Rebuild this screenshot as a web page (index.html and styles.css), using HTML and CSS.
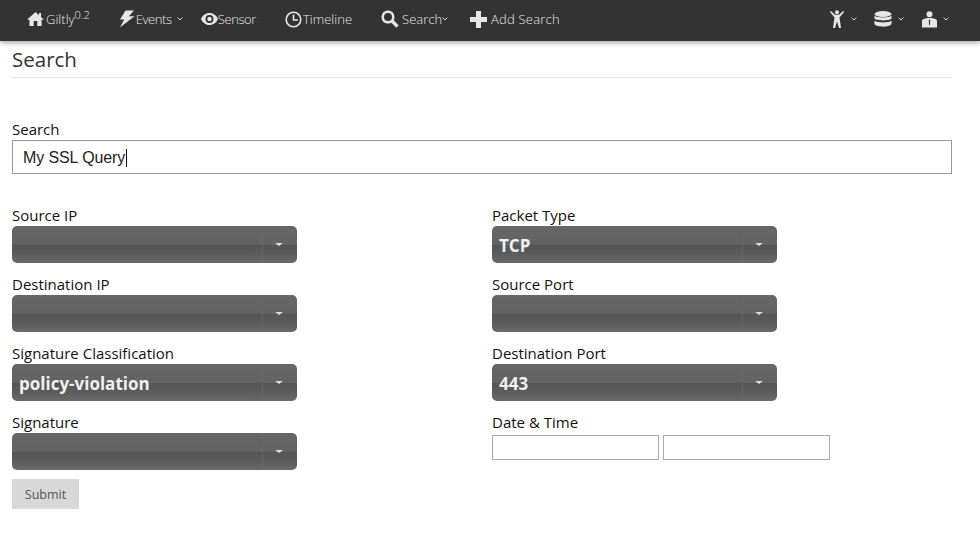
FILE: index.html

```html
<!doctype html>
<html lang="en">
	<head>
		<meta charset="UTF-8">
		<title>Search</title>
		<link rel="stylesheet" href="styles.css">
	</head>
	<body>
		<nav class="navbar">
			<div class="nav-left">
				<a class="nav-item brand">
					<svg class="icon" width="17" height="16" viewBox="0 0 17 16"><path d="M8.500 1 L12 4.200 V2 H14 V6 L17 8.700 H14.600 V15 H10.300 V10 H6.700 V15 H2.400 V8.700 H0 Z"/></svg>
					<span class="nav-text giltly">Giltly<sup>0.2</sup></span>
				</a>
				<a class="nav-item events">
					<svg class="icon" width="16" height="18" viewBox="0 0 17 18"><path d="M7 0 H16 L10.500 6 H16.500 L1 18 L5.500 9.500 H1 Z"/></svg>
					<span class="nav-text tight narrow">Events</span>
					<svg class="chev chev-gap" width="6" height="4" viewBox="0 0 6 4"><path d="M.5.5 3 3 5.500.5"/></svg>
				</a>
				<a class="nav-item sensor">
					<svg class="icon" width="17" height="12" viewBox="0 0 17 12"><path fill-rule="evenodd" d="M8.500 0 C12.500 0 15.500 2.500 17 6 C15.500 9.500 12.500 12 8.500 12 C4.500 12 1.500 9.500 0 6 C1.500 2.500 4.500 0 8.500 0 Z M8.500 2 A4 4 0 1 0 8.500 10 A4 4 0 1 0 8.500 2 Z"/><circle cx="8.500" cy="6" r="2.200"/></svg>
					<span class="nav-text flush narrow">Sensor</span>
				</a>
				<a class="nav-item timeline">
					<svg class="icon clock" width="17" height="17" viewBox="0 0 17 17"><circle cx="8.500" cy="8.500" r="7.300"/><path d="M8.500 3.500 V9 H13"/></svg>
					<span class="nav-text tight">Timeline</span>
				</a>
				<a class="nav-item search">
					<svg class="icon magnifier" width="18" height="18" viewBox="0 0 18 18"><circle cx="7" cy="7" r="5.300"/><path class="handle" d="M11 11 L16.500 16.500"/></svg>
					<span class="nav-text">Search</span>
					<svg class="chev" width="6" height="4" viewBox="0 0 6 4"><path d="M.5.5 3 3 5.500.5"/></svg>
				</a>
				<a class="nav-item">
					<svg class="icon" width="17" height="17" viewBox="0 0 17 17"><path d="M6 0 H11 V6 H17 V11 H11 V17 H6 V11 H0 V6 H6 Z"/></svg>
					<span class="nav-text wide">Add Search</span>
				</a>
			</div>
			<div class="nav-right">
				<a class="nav-item">
					<svg class="icon" width="16" height="18" viewBox="0 0 16 18"><circle cx="8" cy="2.200" r="2"/><path d="M.8 1.800 L1.800 1 L6 4.800 H10 L14.200 1 L15.200 1.800 L10.500 7.500 L12 18 H10 L8 11.500 L6 18 H4 L5.500 7.500 Z"/></svg>
					<svg class="chev chev-wide" width="6" height="4" viewBox="0 0 6 4"><path d="M.5.5 3 3 5.500.5"/></svg>
				</a>
				<a class="nav-item db">
					<svg class="icon" width="18" height="16" viewBox="0 0 18 16"><ellipse cx="9" cy="3" rx="8.500" ry="3"/><path d="M.5 4.500 C2 7 16 7 17.500 4.500 V7.500 C16 10 2 10 .5 7.500 Z"/><path d="M.5 9.500 C2 12 16 12 17.500 9.500 V13 C16 16.500 2 16.500 .5 13 Z"/></svg>
					<svg class="chev chev-wide" width="6" height="4" viewBox="0 0 6 4"><path d="M.5.5 3 3 5.500.5"/></svg>
				</a>
				<a class="nav-item">
					<svg class="icon" width="15" height="17" viewBox="0 0 15 17"><circle cx="7.500" cy="3.300" r="3"/><path fill-rule="evenodd" d="M0 16.500 V9.500 C0 8.500 2.500 7.500 5.500 7 H9.500 C12.500 7.500 15 8.500 15 9.500 V16.500 Z M7.500 8 L6.800 9.500 L7 13.500 L7.500 14.500 L8 13.500 L8.200 9.500 Z"/></svg>
					<svg class="chev chev-wide" width="6" height="4" viewBox="0 0 6 4"><path d="M.5.5 3 3 5.500.5"/></svg>
				</a>
			</div>
		</nav>

		<main class="content">
			<h1 class="page-title">Search</h1>

			<form class="search-form">
				<label class="field-label">Search</label>
				<div class="name-input"><span class="caret-text">My SSL Query</span></div>

				<div class="columns">
					<div class="column">
						<label class="field-label">Source IP</label>
						<div class="dropdown"><span class="dropdown-value"></span><span class="dropdown-arrow"></span></div>
						<label class="field-label">Destination IP</label>
						<div class="dropdown"><span class="dropdown-value"></span><span class="dropdown-arrow"></span></div>
						<label class="field-label">Signature Classification</label>
						<div class="dropdown"><span class="dropdown-value">policy-violation</span><span class="dropdown-arrow"></span></div>
						<label class="field-label">Signature</label>
						<div class="dropdown"><span class="dropdown-value"></span><span class="dropdown-arrow"></span></div>
					</div>
					<div class="column">
						<label class="field-label">Packet Type</label>
						<div class="dropdown"><span class="dropdown-value">TCP</span><span class="dropdown-arrow"></span></div>
						<label class="field-label">Source Port</label>
						<div class="dropdown"><span class="dropdown-value"></span><span class="dropdown-arrow"></span></div>
						<label class="field-label">Destination Port</label>
						<div class="dropdown"><span class="dropdown-value">443</span><span class="dropdown-arrow"></span></div>
						<label class="field-label">Date &amp; Time</label>
						<div class="date-row">
							<input class="date-input" type="text">
							<input class="date-input" type="text">
						</div>
					</div>
				</div>

				<button class="submit-btn" type="button">Submit</button>
			</form>
		</main>
	</body>
</html>
```

FILE: styles.css

```css
* {
	box-sizing: border-box;
}
body {
	margin: 0;
	background-color: white;
	color: #111;
	font-family: "Open Sans", "Noto Sans", sans-serif;
}

/* top bar */
.navbar {
	display: flex;
	justify-content: space-between;
	height: 41px;
	background-color: #333;
	box-shadow: 0 2px 5px rgba(0, 0, 0, 0.35);
	color: #e8e8e8;
}
.nav-left {
	display: flex;
	align-items: center;
	padding-left: 27px;
	padding-bottom: 3px;
}
.nav-right {
	display: flex;
	align-items: center;
	padding-right: 31px;
	padding-bottom: 3px;
}
.nav-item {
	display: flex;
	align-items: center;
	margin-right: 29px;
}
.nav-right .nav-item {
	margin-right: 17px;
}
.nav-right .nav-item.db {
	margin-right: 18px;
}
.nav-right .nav-item:last-child {
	margin-right: 0;
}
.nav-item.events {
	margin-right: 18px;
}
.nav-item.search {
	margin-right: 22px;
}
.nav-text {
	margin-left: 3px;
	font-size: 13px;
	font-weight: 300;
	white-space: nowrap;
}
.nav-text.tight {
	margin-left: 1px;
}
.nav-text.flush {
	margin-left: 0;
}
.nav-text.narrow {
	letter-spacing: -0.4px;
}
.nav-text.wide {
	margin-left: 4px;
	letter-spacing: 0.2px;
}
.nav-text.giltly {
	margin-left: 2px;
}
.giltly sup {
	font-size: 11px;
	line-height: 0;
	vertical-align: 5px;
}
.icon {
	display: block;
	flex: none;
	fill: #e6e6e6;
}
.icon.clock,
.icon.magnifier {
	fill: none;
	stroke: #e6e6e6;
}
.clock {
	stroke-width: 1.6;
}
.magnifier {
	stroke-width: 2.6;
}
.magnifier .handle {
	stroke-width: 3.4;
}
.chev {
	display: block;
	flex: none;
	fill: none;
	stroke: #d8d8d8;
	stroke-width: 1;
}
.chev-gap {
	margin-left: 5px;
}
.chev-wide {
	margin-left: 6px;
}

/* page */
.content {
	width: 952px;
	padding-left: 12px;
}
.page-title {
	margin: 0;
	padding: 4px 0 3px;
	height: 37px;
	border-bottom: 1px solid #e5e5e5;
	color: #333;
	font-size: 20.5px;
	font-weight: 400;
	line-height: 28px;
}
.search-form {
	padding-top: 41px;
}
.field-label {
	display: block;
	height: 20px;
	font-size: 15px;
	line-height: 20px;
	white-space: nowrap;
}
.name-input {
	display: flex;
	align-items: center;
	height: 34px;
	margin-top: 1px;
	padding-top: 1px;
	padding-left: 10px;
	border: 1px solid #999;
	color: #222;
	font-family: "Liberation Sans", Arial, sans-serif;
	font-size: 16px;
}
.caret-text {
	padding-right: 1px;
	border-right: 1px solid #111;
	letter-spacing: -0.1px;
}
.columns {
	display: grid;
	grid-template-columns: 480px 1fr;
	padding-top: 31px;
}
.column .field-label {
	margin-top: 11px;
}
.column .field-label:first-child {
	margin-top: 0;
}
.dropdown {
	display: flex;
	align-items: center;
	justify-content: space-between;
	width: 285px;
	height: 37px;
	margin-top: 1px;
	border-radius: 5px;
	background: linear-gradient(to bottom, #666 0, #636363 50%, #555 52%, #5c5c5c 75%, #6a6a6a 100%);
	color: #f0f0f0;
}
.dropdown-value {
	padding-top: 1px;
	padding-left: 7px;
	font-family: "Open Sans", "Noto Sans", sans-serif;
	font-size: 17px;
	font-weight: 700;
}
.dropdown-arrow {
	display: flex;
	align-items: center;
	justify-content: center;
	width: 35px;
	height: 100%;
	padding-right: 2px;
	border-left: 1px solid #696969;
}
.dropdown-arrow::after {
	content: "";
	border-top: 3px solid #ddd;
	border-left: 4px solid transparent;
	border-right: 4px solid transparent;
}
.date-row {
	display: flex;
	gap: 4px;
	margin-top: 3px;
}
.date-input {
	width: 167px;
	height: 25px;
	padding: 0;
	border: 1px solid #aaa;
	background-color: white;
}
.submit-btn {
	display: block;
	width: 67px;
	height: 30px;
	margin-top: 9px;
	padding: 1px 0 0;
	border: 0;
	background-color: #d8d8d8;
	color: #555;
	font-family: "Open Sans", "Noto Sans", sans-serif;
	font-size: 12.5px;
}
```
